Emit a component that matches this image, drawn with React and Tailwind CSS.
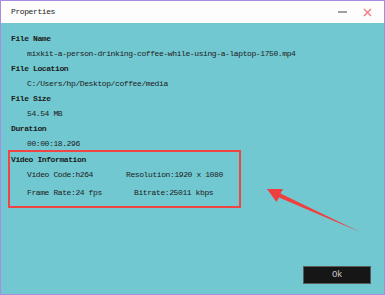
import React from 'react'

const Label = ({ children }) => (
  <p className="h-[15px] leading-[15px] font-bold">{children}</p>
)

const Value = ({ children }) => (
  <p className="h-[15px] leading-[15px] pl-[16px]">{children}</p>
)

const App = () => {
  return (
    <div
      className="relative w-[385px] h-[295px] border border-[#a98ce0] bg-[#72c8d0] flex flex-col text-[8px] tracking-[-0.4px] text-[#1c1c1c] overflow-hidden"
      style={{ fontFamily: '"Liberation Mono", "DejaVu Sans Mono", monospace' }}
    >
      <div className="h-[22px] bg-[#fdfdfe] flex items-center pl-[10px] pr-[8px]">
        <span className="flex-1 leading-none">Properties</span>
        <span className="w-[9px] h-[2px] bg-[#a0a0a0] mr-[16px]"></span>
        <svg width="9" height="9" viewBox="0 0 9 9" className="mr-[4px]">
          <path d="M1 1 L8 8 M8 1 L1 8" stroke="#f07a80" strokeWidth="1.4" />
        </svg>
      </div>

      <div className="flex-1 flex flex-col pt-[8px] pl-[10px]">
        <Label>File Name</Label>
        <Value>mixkit-a-person-drinking-coffee-while-using-a-laptop-1750.mp4</Value>
        <Label>File Location</Label>
        <Value>C:/Users/hp/Desktop/coffee/media</Value>
        <Label>File Size</Label>
        <Value>54.54 MB</Value>
        <Label>Duration</Label>
        <Value>00:00:18.296</Value>

        <div className="-mt-[1px] -ml-[3px] w-[233px] border-2 border-[#f04545] pl-[1px] pb-[6px]">
          <Label>Video Information</Label>
          <div className="flex h-[15px] leading-[15px] pl-[16px]">
            <span className="w-[99px]">Video Code:h264</span>
            <span>Resolution:1920 x 1080</span>
          </div>
          <div className="flex h-[15px] leading-[15px] pl-[16px] mt-[3px]">
            <span className="w-[107px]">Frame Rate:24 fps</span>
            <span>Bitrate:25011 kbps</span>
          </div>
        </div>

        <div className="flex-1"></div>
        <div className="flex justify-end pr-[13px] pb-[10px]">
          <button className="w-[68px] h-[18px] bg-[#161616] border border-[#5a5a5a] text-[#c8c8c8] text-[9px] leading-none">
            Ok
          </button>
        </div>
      </div>

      <svg className="absolute left-0 top-0 pointer-events-none" width="385" height="295">
        <polygon
          points="266,188 282,188 279.5,192.5 359,231 278,196.5 275.5,201"
          fill="#ef3f3f"
        />
      </svg>
    </div>
  )
}

export default App
